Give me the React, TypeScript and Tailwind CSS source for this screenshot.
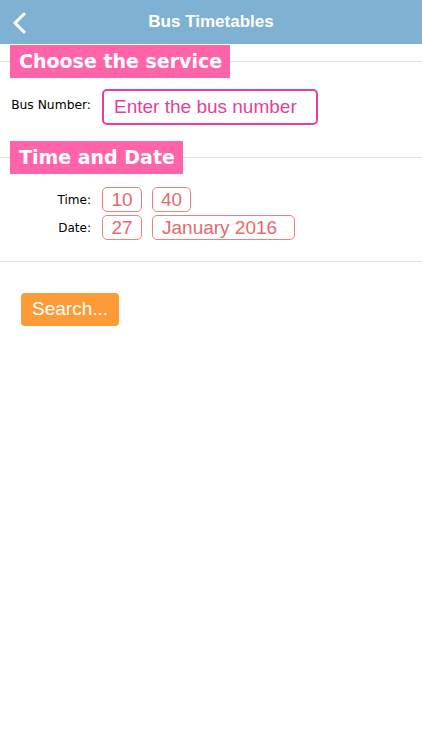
import React from "react";

const sans = { fontFamily: '"Liberation Sans", Arial, sans-serif' };
const verdana = { fontFamily: '"DejaVu Sans", Verdana, sans-serif' };

function SectionHeading({ text }: { text: string }) {
  return (
    <div className="relative px-[10px]">
      <div className="absolute inset-x-0 top-[16px] h-px bg-[#dedede]" />
      <div
        className="relative inline-flex h-[33px] items-center bg-[#ff64ab] pl-[9px] pr-[8px] text-[19px] font-bold text-white"
        style={verdana}
      >
        {text}
      </div>
    </div>
  );
}

function Box({ children, w, center }: { children: React.ReactNode; w: string; center?: boolean }) {
  return (
    <div
      className={`${w} flex h-[25px] items-center rounded-[5px] border border-[#f08080] text-[19px] leading-none text-[#e8686c] ${center ? "justify-center" : "pl-[9px]"}`}
      style={sans}
    >
      {children}
    </div>
  );
}

export default function App() {
  return (
    <div className="min-h-[750px] w-full bg-white">
      {/* Header */}
      <div className="relative flex h-[44px] items-center justify-center bg-[#7fb1d3]">
        <svg
          className="absolute left-[12px] top-[12px]"
          width="16"
          height="22"
          viewBox="0 0 16 22"
          fill="none"
        >
          <path d="M12 2 L3 11 L12 20" stroke="white" strokeWidth="3" strokeLinecap="round" strokeLinejoin="round" />
        </svg>
        <span className="text-[17px] font-bold text-white" style={sans}>
          Bus Timetables
        </span>
      </div>

      {/* Section 1 */}
      <div className="pt-px">
        <SectionHeading text="Choose the service" />
      </div>
      <div className="mt-[11px] flex items-start">
        <div className="w-[91px] pt-[9px] text-right text-[12.3px] leading-[15px] text-black" style={verdana}>
          Bus Number:
        </div>
        <div
          className="ml-[11px] flex h-[36px] w-[216px] items-center rounded-[5px] border-2 border-[#e8409a] pl-[10px] text-[19px] text-[#e53f97]"
          style={sans}
        >
          Enter the bus number
        </div>
      </div>

      {/* Section 2 */}
      <div className="mt-[16px]">
        <SectionHeading text="Time and Date" />
      </div>
      <div className="mt-[13px] flex flex-col gap-[3px]">
        <div className="flex items-center">
          <div className="w-[91px] text-right text-[12px] text-black" style={verdana}>
            Time:
          </div>
          <div className="ml-[11px] flex gap-[10px]">
            <Box w="w-[40px]" center>10</Box>
            <Box w="w-[39px]" center>40</Box>
          </div>
        </div>
        <div className="flex items-center">
          <div className="w-[91px] text-right text-[12px] text-black" style={verdana}>
            Date:
          </div>
          <div className="ml-[11px] flex gap-[10px]">
            <Box w="w-[40px]" center>27</Box>
            <Box w="w-[143px]">January 2016</Box>
          </div>
        </div>
      </div>

      <div className="mt-[21px] h-px bg-[#dedede]" />

      <div className="mt-[31px] pl-[21px]">
        <button
          className="flex h-[33px] items-center rounded-[4px] bg-[#fd9b36] px-[11px] text-[19px] text-white"
          style={sans}
        >
          Search...
        </button>
      </div>
    </div>
  );
}
